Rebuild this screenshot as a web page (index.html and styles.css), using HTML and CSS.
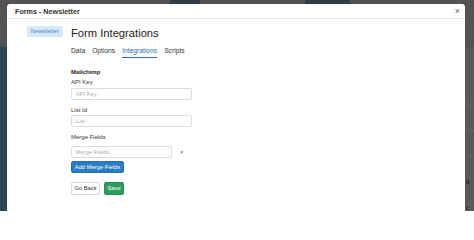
FILE: index.html
```html
<!DOCTYPE html>
<html>
<head>
<meta charset="utf-8">
<link rel="stylesheet" href="styles.css">
</head>
<body>
<div class="page">
  <div class="topbar"><span class="topblock"></span><span class="topblock b2"></span></div>
  <div class="below">
    <div class="sidebar"></div>
    <div class="main">
      <div class="ghost">co</div>
      <div class="ghost">Da</div>
      <div class="ghost">ns</div>
      <div class="ghost dark">0</div>
      <div class="ghost dark">r</div>
    </div>
  </div>
</div>
<div class="modal">
  <div class="modal-header">
    <span class="modal-title">Forms - Newsletter</span>
    <span class="close">&#215;</span>
  </div>
  <div class="modal-body">
    <div class="side">
      <span class="badge">Newsletter</span>
    </div>
    <div class="content">
      <h1 class="heading">Form Integrations</h1>
      <div class="tabs">
        <span class="tab">Data</span>
        <span class="tab">Options</span>
        <span class="tab active">Integrations</span>
        <span class="tab">Scripts</span>
      </div>
      <div class="section-title">Mailchimp</div>
      <div class="field first">
        <label class="label">API Key</label>
        <div class="input">API Key</div>
      </div>
      <div class="field">
        <label class="label">List Id</label>
        <div class="input">List</div>
      </div>
      <div class="field">
        <label class="label merge">Merge Fields</label>
        <div class="merge-row">
          <div class="input short">Merge Fields</div>
          <span class="remove">&#215;</span>
        </div>
      </div>
      <button class="btn btn-blue">Add Merge Fields</button>
      <div class="actions">
        <button class="btn btn-white">Go Back</button>
        <button class="btn btn-green">Save</button>
      </div>
    </div>
  </div>
</div>
</body>
</html>
```

FILE: styles.css
```css
* { box-sizing: border-box; }
html, body {
  margin: 0;
  padding: 0;
  width: 474px;
  height: 211px;
  overflow: hidden;
  font-family: "Liberation Sans", Arial, sans-serif;
}
.page {
  width: 474px;
  height: 211px;
  background: #58595a;
  display: flex;
  flex-direction: column;
}
.topbar {
  height: 48px;
  background: #525354;
  display: flex;
  gap: 105px;
  padding-left: 170px;
}
.topblock {
  display: block;
  width: 30px;
  height: 4px;
  background: #2e3d4a;
}
.topblock.b2 { width: 45px; }
.below {
  flex: 1;
  display: flex;
}
.sidebar {
  width: 8px;
  background: #2e4651;
}
.main {
  flex: 1;
  display: flex;
  flex-direction: column;
  align-items: flex-end;
  padding-top: 54px;
  gap: 20px;
}
.ghost {
  font-size: 6px;
  color: #6c6d6e;
  width: 8px;
  overflow: hidden;
}
.ghost.dark { color: #222; font-weight: bold; }

.modal {
  position: absolute;
  left: 7px;
  top: 4px;
  width: 458px;
  height: 220px;
  background: #fff;
  border-radius: 3px;
}
.modal-header {
  height: 15px;
  border-bottom: 1px solid #e6e6e6;
  display: flex;
  align-items: center;
  justify-content: space-between;
  padding: 0 5px 0 8px;
}
.modal-title {
  font-size: 7.2px;
  font-weight: bold;
  color: #333;
}
.close {
  font-size: 9px;
  color: #666;
  line-height: 1;
}
.modal-body {
  display: flex;
  padding: 7px 0 0 20px;
  gap: 8px;
}
.side { width: 36px; }
.badge {
  display: block;
  width: 36px;
  height: 11px;
  background: #d6e8f6;
  color: #4c87c2;
  font-size: 6px;
  line-height: 11px;
  text-align: center;
  border-radius: 2px;
}
.content {
  display: flex;
  flex-direction: column;
  align-items: flex-start;
}
.heading {
  margin: 0;
  font-size: 11.2px;
  font-weight: normal;
  line-height: 14px;
  color: #222;
}
.tabs {
  display: flex;
  gap: 7px;
  margin-top: 6px;
}
.tab {
  font-size: 6.7px;
  line-height: 8px;
  color: #333;
  padding: 1px 0 1.5px;
  border-bottom: 1.5px solid transparent;
}
.tab.active {
  color: #2b6fad;
  border-bottom-color: #2b6fad;
}
.section-title {
  margin-top: 10px;
  font-size: 6px;
  line-height: 8px;
  font-weight: bold;
  color: #222;
}
.field {
  display: flex;
  flex-direction: column;
  margin-top: 6px;
}
.field.first { margin-top: 2.5px; }
.label {
  font-size: 6px;
  line-height: 8px;
  color: #333;
  margin-bottom: 1.5px;
}
.label.merge { margin-bottom: 4.5px; }
.input {
  width: 121px;
  height: 12px;
  border: 1px solid #dcdcdc;
  border-radius: 2px;
  font-size: 5.7px;
  color: #aaa;
  line-height: 10px;
  padding-left: 4px;
}
.merge-row {
  display: flex;
  align-items: center;
  gap: 8px;
}
.input.short { width: 101px; }
.remove {
  font-size: 6px;
  color: #555;
}
.btn {
  font-family: inherit;
  border-radius: 2px;
  font-size: 5.8px;
  padding: 0;
  cursor: pointer;
}
.btn-blue {
  margin-top: 3.5px;
  width: 53px;
  height: 11.5px;
  background: #2b7dc1;
  color: #fff;
  border: 1px solid #2770ad;
}
.actions {
  display: flex;
  gap: 4px;
  margin-top: 9.5px;
}
.btn-white {
  width: 29px;
  height: 12.5px;
  background: #fff;
  color: #333;
  border: 1px solid #d8d8d8;
}
.btn-green {
  width: 20px;
  height: 12.5px;
  background: #2f9c5f;
  color: #fff;
  border: 1px solid #2a8d55;
}
```
